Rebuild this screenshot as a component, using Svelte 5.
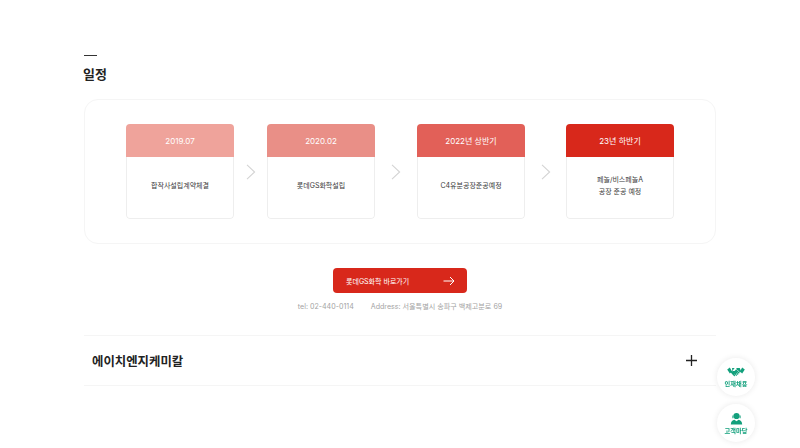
<script>
  const steps = [
    { date: '2019.07', lines: ['합작사설립계약체결'], tone: 'tone1', gap: 'gap-s' },
    { date: '2020.02', lines: ['롯데GS화학설립'], tone: 'tone2', gap: 'gap-l' },
    { date: '2022년 상반기', lines: ['C4유분공장준공예정'], tone: 'tone3', gap: 'gap-m' },
    { date: '23년 하반기', lines: ['페놀/비스페놀A', '공장 준공 예정'], tone: 'tone4', gap: '' }
  ];
</script>

<div class="page">
  <section class="schedule">
    <span class="dash"></span>
    <h2>일정</h2>

    <div class="panel">
      {#each steps as step, i}
        <div class="card">
          <div class="card-head {step.tone}">{step.date}</div>
          <div class="card-body">
            {#each step.lines as line}
              <p>{line}</p>
            {/each}
          </div>
        </div>
        {#if i < steps.length - 1}
          <div class="arrow {step.gap}">
            <svg width="10" height="16" viewBox="0 0 10 16" fill="none">
              <path d="M1 .8 8.6 8 1 15.2" stroke="#d4d4d4" stroke-width="1.1" />
            </svg>
          </div>
        {/if}
      {/each}
    </div>

    <div class="actions">
      <button class="go">
        <span>롯데GS화학 바로가기</span>
        <svg width="12" height="10" viewBox="0 0 12 10" fill="none">
          <path d="M.5 5h10.5M7 1l4 4-4 4" stroke="#fff" stroke-width="1" />
        </svg>
      </button>
      <div class="contact">
        <span>tel: 02-440-0114</span>
        <span>Address: 서울특별시 송파구 백제고분로 69</span>
      </div>
    </div>
  </section>

  <div class="company">
    <h3>에이치엔지케미칼</h3>
    <svg width="11" height="11" viewBox="0 0 11 11">
      <path d="M5.5 0v11M0 5.5h11" stroke="#222" stroke-width="1.3" />
    </svg>
  </div>
</div>

<aside class="floating">
  <div class="fab">
    <svg width="18" height="11" viewBox="0 0 16 10">
      <path d="M0 2.2 2.4.4l2 3.6-2 2zM16 2.2 13.6.4l-2 3.6 2 2zM4.4.9h2.4L5 3.2c.6.8 1.7.6 2.4-.3l.7-.9 3.3 3.3-.8.9-2.2-2 1.8 2.5-.7.6-1.8-2.3 1.2 2.7-.8.5-1.5-2.4.6 2.4-.8.3-1.6-1.6-2.1-2.5L4.7 4z" fill="#12a07c" />
      <path d="M8.2.9h3.2l1.2 3-.9 1-3-2.8z" fill="#12a07c" />
    </svg>
    <span>인재채용</span>
  </div>
  <div class="fab">
    <svg width="13" height="13" viewBox="0 0 13 13">
      <circle cx="6.5" cy="4" r="3.1" fill="#12a07c" />
      <path d="M2.4 3.6h1v2.6h-1zM9.6 3.6h1v2.6h-1z" fill="#12a07c" />
      <path d="M.8 12.6c0-3 2-4.6 3.6-4.8l2.1 1.4 2.1-1.4c1.6.2 3.6 1.8 3.6 4.8z" fill="#12a07c" />
    </svg>
    <span>고객마당</span>
  </div>
</aside>

<style>
  :global(body) {
    margin: 0;
    background: #fff;
    font-family: 'Inter', 'Noto Sans CJK KR', sans-serif;
    overflow: hidden;
  }

  .page {
    width: 632px;
    margin: 0 auto;
    padding-top: 55px;
    height: 393px;
  }

  .dash {
    display: block;
    width: 13px;
    height: 1px;
    background: #333;
  }

  h2 {
    margin: 10px 0 0 -1px;
    font-size: 13px;
    line-height: 16px;
    font-weight: 700;
    color: #222;
  }

  .panel {
    margin-top: 17px;
    box-sizing: border-box;
    height: 145px;
    padding: 24px 40px 0 41px;
    border: 1px solid #f5f5f5;
    border-radius: 14px;
    display: flex;
    align-items: flex-start;
  }

  .card {
    width: 108px;
    height: 95px;
    border-radius: 4px;
    overflow: hidden;
    flex: none;
  }

  .card-head {
    height: 33px;
    display: flex;
    align-items: center;
    justify-content: center;
    color: #fff;
    font-size: 8px;
    font-weight: 400;
  }

  .tone1 { background: #efa39b; }
  .tone2 { background: #e98f87; }
  .tone3 { background: #e26058; }
  .tone4 { background: #d8281b; }

  .card-body {
    height: 62px;
    border: 1px solid #eeeeee;
    border-top: 0;
    border-radius: 0 0 4px 4px;
    display: flex;
    flex-direction: column;
    align-items: center;
    justify-content: center;
    gap: 3px;
    padding-bottom: 4px;
    box-sizing: border-box;
  }

  .card-body p {
    margin: 0;
    font-size: 7px;
    line-height: 9px;
    color: #3a3a3a;
  }

  .arrow {
    flex: none;
    width: 33px;
    height: 95px;
    display: flex;
    align-items: center;
    justify-content: center;
  }

  .gap-l { width: 42px; }
  .gap-m { width: 41px; }

  .actions {
    display: flex;
    flex-direction: column;
    align-items: center;
    margin-top: 24px;
  }

  .go {
    box-sizing: border-box;
    width: 134px;
    height: 25px;
    border: 0;
    border-radius: 4px;
    padding: 0 12px 0 13px;
    background: #d8281b;
    color: #fff;
    font: 400 7px 'Inter', 'Noto Sans CJK KR', sans-serif;
    display: flex;
    align-items: center;
    justify-content: space-between;
  }

  .contact {
    margin-top: 9px;
    display: flex;
    gap: 17px;
    font-size: 7.1px;
    line-height: 10px;
    color: #a3a3a3;
  }

  .company {
    margin-top: 23px;
    height: 51px;
    box-sizing: border-box;
    border-top: 1px solid #f5f5f5;
    border-bottom: 1px solid #f5f5f5;
    padding: 0 19px 0 8px;
    display: flex;
    align-items: center;
    justify-content: space-between;
  }

  h3 {
    margin: 0;
    font-size: 12.4px;
    font-weight: 700;
    color: #222;
  }

  .floating {
    position: fixed;
    left: 717px;
    top: 358px;
    display: flex;
    flex-direction: column;
    gap: 8px;
  }

  .fab {
    box-sizing: border-box;
    width: 38px;
    height: 38px;
    border-radius: 50%;
    background: #fff;
    box-shadow: 0 0 6px rgba(0, 0, 0, 0.09);
    display: flex;
    flex-direction: column;
    align-items: center;
    justify-content: center;
    gap: 2px;
    color: #12a07c;
    font-size: 6.2px;
    font-weight: 700;
    line-height: 8px;
  }
</style>
